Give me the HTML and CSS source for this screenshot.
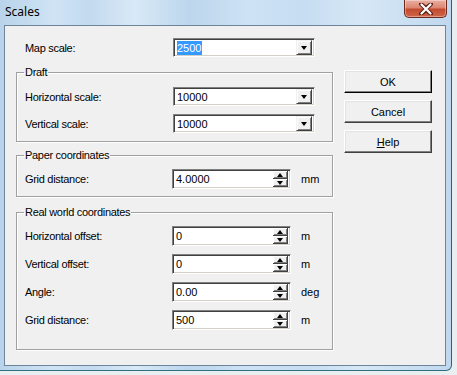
FILE: index.html
```html
<!DOCTYPE html>
<html lang="en">
<head>
    <meta charset="UTF-8">
    <title>Scales</title>
    <link rel="stylesheet" href="styles.css">
</head>
<body>
    <div class="window">
        <div class="titlebar">
            <span class="title">Scales</span>
            <div class="close">
                <svg width="16" height="12" viewBox="0 0 16 12">
                    <path d="M3 1 L8 5 L13 1 M3 11 L8 7 L13 11 M3 1 L13 11 M13 1 L3 11" stroke="#5a2018" stroke-width="4" stroke-linecap="round" fill="none"/>
                    <path d="M3.5 1.5 L12.5 10.5 M12.5 1.5 L3.5 10.5" stroke="#fff" stroke-width="2.2" stroke-linecap="round" fill="none"/>
                </svg>
            </div>
        </div>

        <div class="client">
            <div class="form">
                <div class="row top-row">
                    <span class="label">Map scale:</span>
                    <div class="combo">
                        <span class="value"><span class="selected">2500</span></span>
                        <span class="drop"><span class="arrow-down"></span></span>
                    </div>
                </div>

                <fieldset class="group group-draft">
                    <legend>Draft</legend>
                    <div class="row">
                        <span class="label">Horizontal scale:</span>
                        <div class="combo">
                            <span class="value">10000</span>
                            <span class="drop"><span class="arrow-down"></span></span>
                        </div>
                    </div>
                    <div class="row">
                        <span class="label">Vertical scale:</span>
                        <div class="combo">
                            <span class="value">10000</span>
                            <span class="drop"><span class="arrow-down"></span></span>
                        </div>
                    </div>
                </fieldset>

                <fieldset class="group group-paper">
                    <legend>Paper coordinates</legend>
                    <div class="row">
                        <span class="label">Grid distance:</span>
                        <div class="spin">
                            <span class="value">4.0000</span>
                            <span class="spin-btns">
                                <span class="spin-btn"><span class="arrow-up"></span></span>
                                <span class="spin-btn"><span class="arrow-down"></span></span>
                            </span>
                        </div>
                        <span class="unit">mm</span>
                    </div>
                </fieldset>

                <fieldset class="group group-real">
                    <legend>Real world coordinates</legend>
                    <div class="row">
                        <span class="label">Horizontal offset:</span>
                        <div class="spin">
                            <span class="value">0</span>
                            <span class="spin-btns">
                                <span class="spin-btn"><span class="arrow-up"></span></span>
                                <span class="spin-btn"><span class="arrow-down"></span></span>
                            </span>
                        </div>
                        <span class="unit">m</span>
                    </div>
                    <div class="row">
                        <span class="label">Vertical offset:</span>
                        <div class="spin">
                            <span class="value">0</span>
                            <span class="spin-btns">
                                <span class="spin-btn"><span class="arrow-up"></span></span>
                                <span class="spin-btn"><span class="arrow-down"></span></span>
                            </span>
                        </div>
                        <span class="unit">m</span>
                    </div>
                    <div class="row">
                        <span class="label">Angle:</span>
                        <div class="spin">
                            <span class="value">0.00</span>
                            <span class="spin-btns">
                                <span class="spin-btn"><span class="arrow-up"></span></span>
                                <span class="spin-btn"><span class="arrow-down"></span></span>
                            </span>
                        </div>
                        <span class="unit">deg</span>
                    </div>
                    <div class="row">
                        <span class="label">Grid distance:</span>
                        <div class="spin">
                            <span class="value">500</span>
                            <span class="spin-btns">
                                <span class="spin-btn"><span class="arrow-up"></span></span>
                                <span class="spin-btn"><span class="arrow-down"></span></span>
                            </span>
                        </div>
                        <span class="unit">m</span>
                    </div>
                </fieldset>
            </div>

            <div class="buttons">
                <button class="btn btn-default">OK</button>
                <button class="btn">Cancel</button>
                <button class="btn"><u>H</u>elp</button>
            </div>
        </div>
    </div>
</body>
</html>
```

FILE: styles.css
```css
* {
    margin: 0;
    padding: 0;
    box-sizing: border-box;
}

body {
    background: #e9eef1;
    font-family: "Liberation Sans", Arial, sans-serif;
    font-size: 11px;
    color: #000;
}

.window {
    width: 452px;
    height: 371px;
    background: linear-gradient(90deg, #b9d3ea 0%, #cfe3f4 12%, #c3daef 20%, #d8e9f7 30%, #bcd6ed 42%, #cde2f4 55%, #c7ddf1 68%, #d6e8f6 80%, #c0d8ee 100%);
    border-right: 1px solid #3b5a74;
    border-bottom: 1px solid #2f6f80;
    border-bottom-right-radius: 6px;
    display: flex;
    flex-direction: column;
}

.titlebar {
    height: 25px;
    display: flex;
    justify-content: space-between;
    align-items: flex-start;
    padding-left: 5px;
}

.title {
    font-family: "Noto Sans", "Open Sans", sans-serif;
    font-size: 12px;
    line-height: 24px;
}

.close {
    width: 43px;
    height: 18px;
    margin-right: 4px;
    background: linear-gradient(180deg, #eab0a2 0%, #dc8672 45%, #c24a30 55%, #d0664a 100%);
    border: 1px solid #6e2a1f;
    border-top: none;
    border-radius: 0 0 5px 5px;
    box-shadow: inset 0 0 0 1px rgba(255, 255, 255, 0.35);
    display: flex;
    align-items: center;
    justify-content: center;
}

.client {
    margin: 0 5px 0 4px;
    height: 341px;
    background: #f0f0f0;
    border: 1px solid #6d859b;
    display: flex;
    align-items: flex-start;
}

.form {
    width: 328px;
    padding: 12px 0 0 11px;
}

.row {
    display: flex;
    align-items: center;
    height: 19px;
}

.top-row {
    padding-left: 9px;
}

.label {
    width: 147px;
    flex: none;
    letter-spacing: -0.3px;
}

.group {
    border: 1px solid #a0a0a0;
    box-shadow: 1px 1px 0 #fff, inset 1px 1px 0 #fff;
    padding: 0 8px;
    display: flex;
    flex-direction: column;
    gap: 8px;
}

.group legend {
    margin-left: -1px;
    padding: 0 1px;
    line-height: 12px;
    letter-spacing: -0.3px;
}

.group-draft {
    margin-top: 9px;
    padding-top: 9px;
    padding-bottom: 8px;
}

.group-paper {
    margin-top: 7px;
    padding-top: 8px;
    padding-bottom: 7px;
}

.group-real {
    margin-top: 9px;
    padding-top: 8px;
    padding-bottom: 19px;
}

.group-paper .row,
.group-real .row {
    height: 20px;
}

.combo,
.spin {
    height: 19px;
    background: #fff;
    border-top: 1px solid #808080;
    border-left: 1px solid #808080;
    border-right: 1px solid #fff;
    border-bottom: 1px solid #fff;
    box-shadow: inset 1px 1px 0 #404040, inset -1px -1px 0 #d4d0c8;
    display: flex;
    align-items: center;
    padding: 2px;
}

.combo {
    width: 142px;
    margin-left: 1px;
}

.spin {
    width: 119px;
    height: 20px;
}

.value {
    flex: 1;
    padding-left: 1px;
    line-height: 14px;
}

.selected {
    background: #3399ff;
    color: #fff;
    display: inline-block;
    padding-right: 1px;
}

.drop {
    width: 16px;
    height: 15px;
    background: #f0f0f0;
    border-top: 1px solid #f0f0f0;
    border-left: 1px solid #f0f0f0;
    border-right: 1px solid #404040;
    border-bottom: 1px solid #404040;
    box-shadow: inset 1px 1px 0 #fff, inset -1px -1px 0 #808080;
    display: flex;
    align-items: center;
    justify-content: center;
}

.spin-btns {
    width: 15px;
    height: 16px;
    display: flex;
    flex-direction: column;
}

.spin-btn {
    flex: 1;
    background: #f0f0f0;
    border-right: 1px solid #404040;
    border-bottom: 1px solid #404040;
    box-shadow: inset 1px 1px 0 #fff, inset -1px -1px 0 #808080;
    display: flex;
    align-items: center;
    justify-content: center;
}

.arrow-down {
    width: 0;
    height: 0;
    border-left: 3.5px solid transparent;
    border-right: 3.5px solid transparent;
    border-top: 4px solid #000;
}

.arrow-up {
    width: 0;
    height: 0;
    border-left: 3.5px solid transparent;
    border-right: 3.5px solid transparent;
    border-bottom: 4px solid #000;
}

.unit {
    margin-left: 10px;
}

.buttons {
    margin: 44px 0 0 11px;
    display: flex;
    flex-direction: column;
    gap: 7px;
}

.btn {
    width: 88px;
    height: 23px;
    font-family: "Liberation Sans", Arial, sans-serif;
    font-size: 11px;
    color: #000;
    background: #f0f0f0;
    border-top: 1px solid #fff;
    border-left: 1px solid #fff;
    border-right: 1px solid #404040;
    border-bottom: 1px solid #404040;
    box-shadow: inset -1px -1px 0 #808080, inset 1px 1px 0 #e3e3e3;
}

.btn-default {
    border-right-color: #000;
    border-bottom-color: #000;
}
```
